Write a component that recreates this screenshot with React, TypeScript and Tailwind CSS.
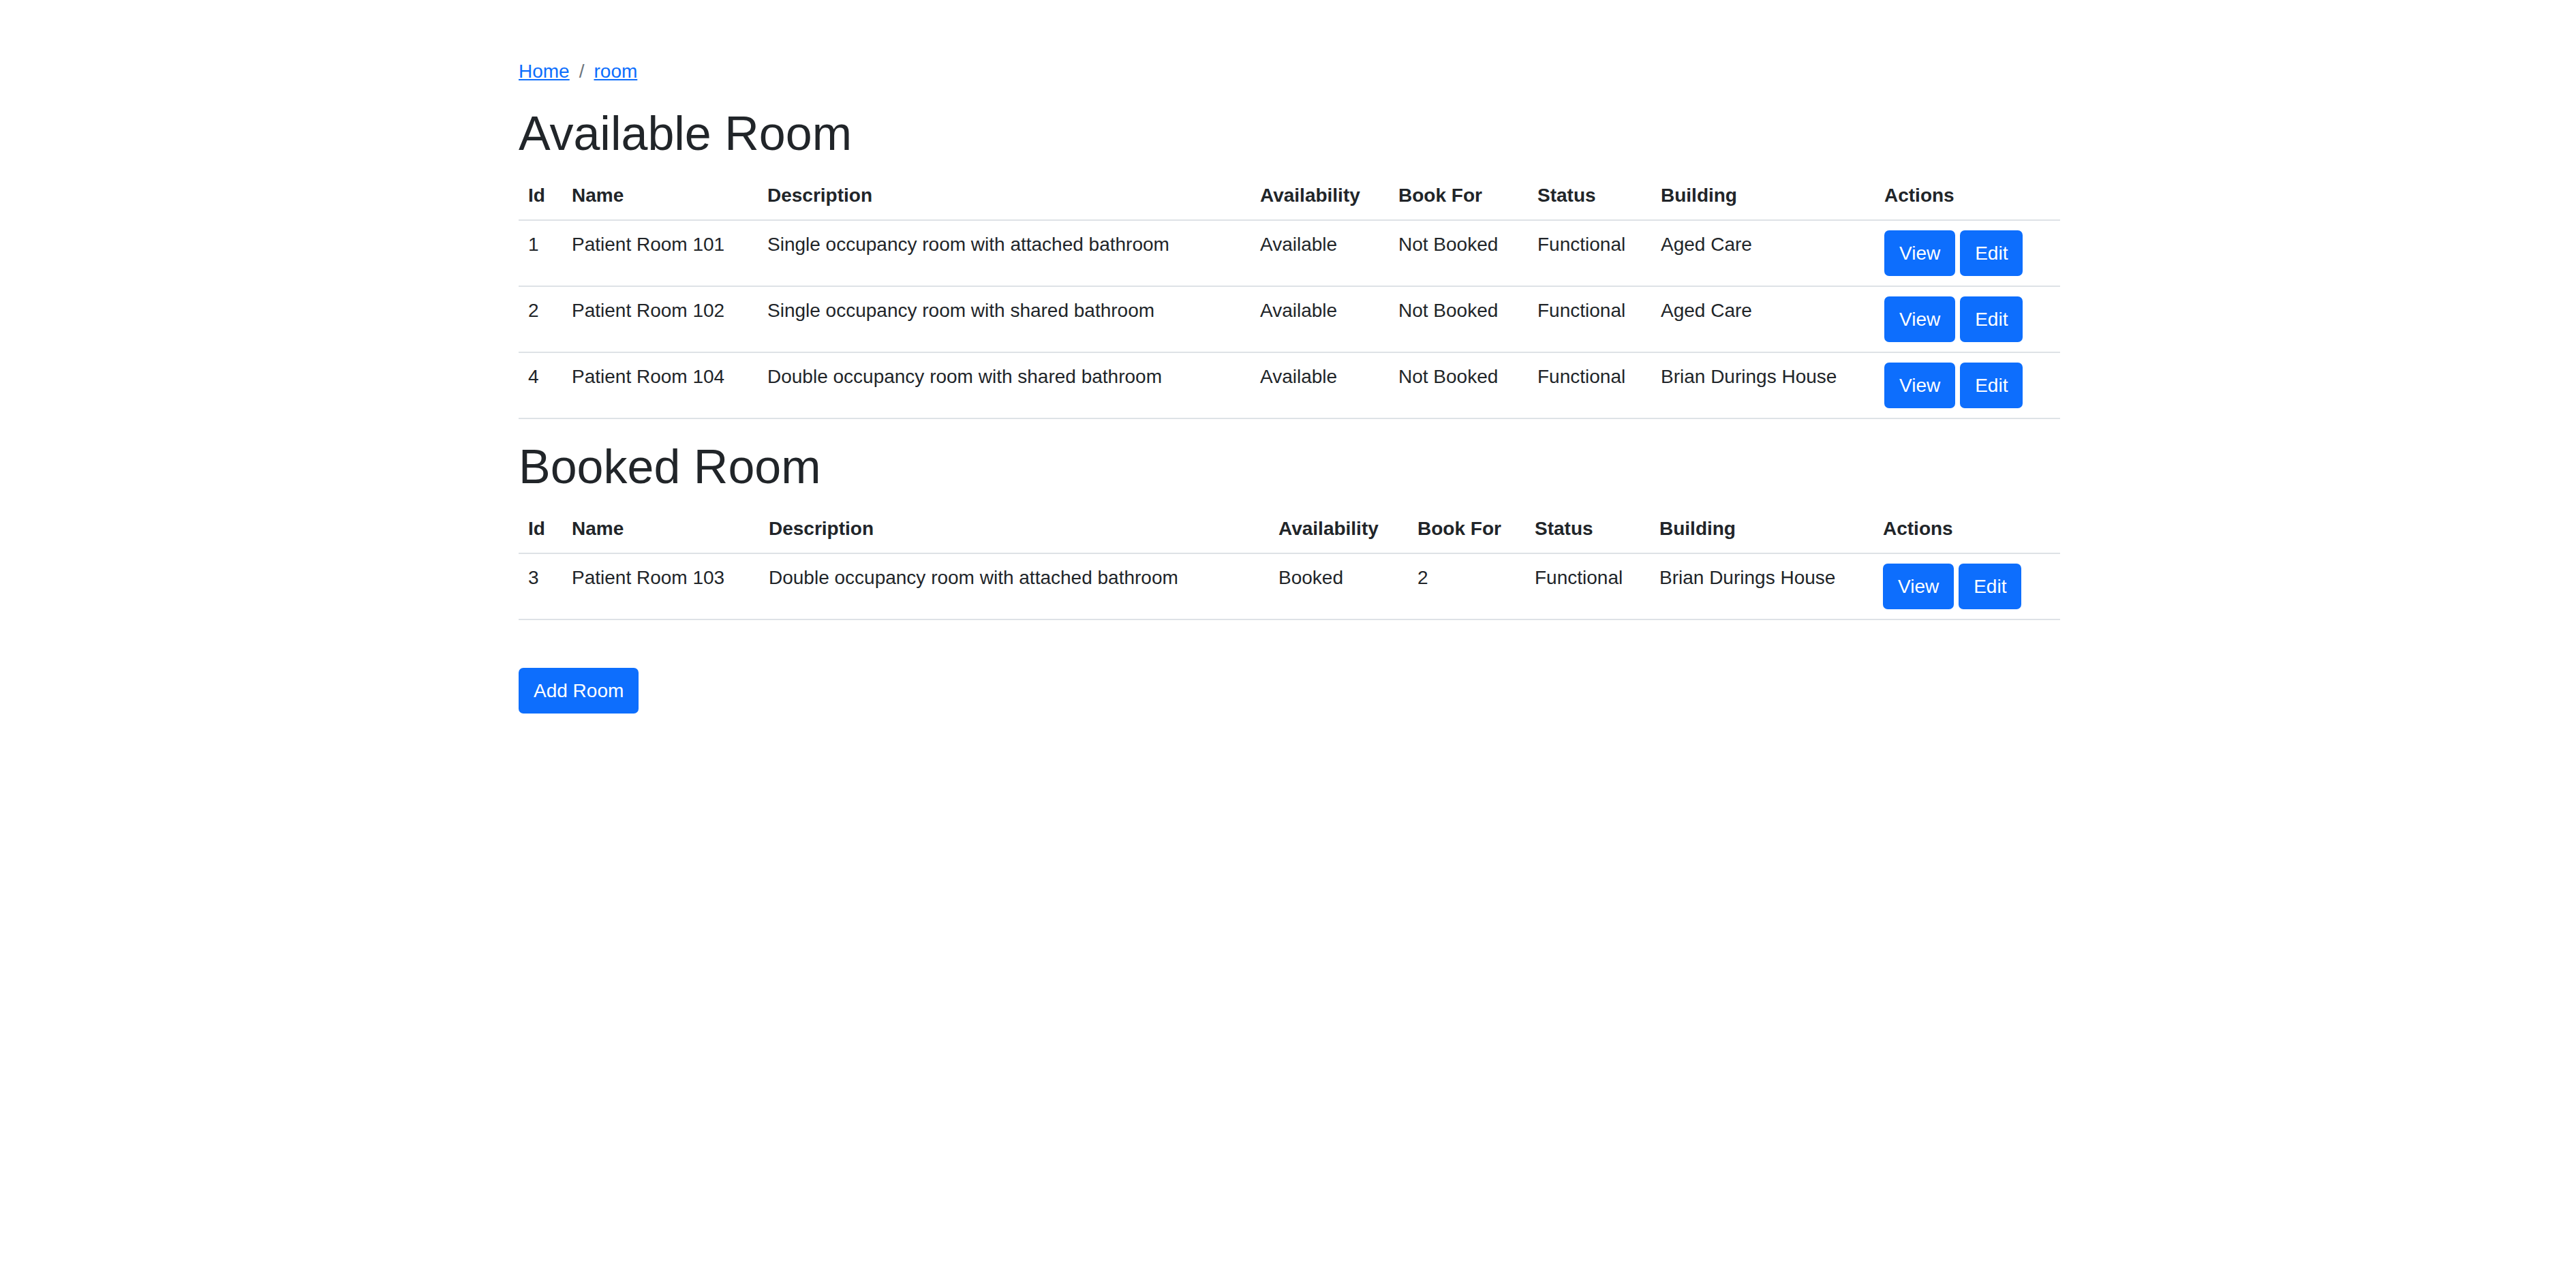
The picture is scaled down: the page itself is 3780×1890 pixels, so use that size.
import React from "react";

type Row = [number, string, string, string, string, string, string];

const available: Row[] = [
  [1, "Patient Room 101", "Single occupancy room with attached bathroom", "Available", "Not Booked", "Functional", "Aged Care"],
  [2, "Patient Room 102", "Single occupancy room with shared bathroom", "Available", "Not Booked", "Functional", "Aged Care"],
  [4, "Patient Room 104", "Double occupancy room with shared bathroom", "Available", "Not Booked", "Functional", "Brian Durings House"],
];

const booked: Row[] = [
  [3, "Patient Room 103", "Double occupancy room with attached bathroom", "Booked", "2", "Functional", "Brian Durings House"],
];

const headers = ["Id", "Name", "Description", "Availability", "Book For", "Status", "Building", "Actions"];

const widths1 = ["w-[64px]", "w-[287px]", "w-[723px]", "w-[203px]", "w-[204px]", "w-[181px]", "w-[328px]", "w-[272px]"];
const widths2 = ["w-[64px]", "w-[289px]", "w-[748px]", "w-[204px]", "w-[172px]", "w-[183px]", "w-[328px]", "w-[274px]"];

function Btn({ children }: { children: React.ReactNode }) {
  return (
    <button className="h-[67px] px-[22px] rounded-[7px] bg-[#0d6efd] text-white text-[28px] leading-[42px] flex items-center justify-center">
      {children}
    </button>
  );
}

function RoomTable({ rows, widths }: { rows: Row[]; widths: string[] }) {
  return (
    <table className="w-full table-fixed border-collapse mb-[28px] text-[#212529]">
      <thead>
        <tr>
          {headers.map((h, i) => (
            <th
              key={h}
              className={`${widths[i]} text-left font-bold align-bottom px-[14px] py-[14px] border-b-2 border-[#dee2e6] whitespace-nowrap`}
            >
              {h}
            </th>
          ))}
        </tr>
      </thead>
      <tbody>
        {rows.map((r) => (
          <tr key={r[0]}>
            {r.map((c, i) => (
              <td key={i} className="align-top px-[14px] py-[14px] border-b-2 border-[#dee2e6] whitespace-nowrap">
                {c}
              </td>
            ))}
            <td className="align-top px-[14px] py-[14px] border-b-2 border-[#dee2e6]">
              <div className="flex gap-[7px]">
                <Btn>View</Btn>
                <Btn>Edit</Btn>
              </div>
            </td>
          </tr>
        ))}
      </tbody>
    </table>
  );
}

export default function App() {
  return (
    <div className="min-h-screen bg-white font-['Liberation_Sans',Arial,sans-serif] text-[28px] leading-[42px] text-[#212529]">
      <div className="ml-[761px] w-[2262px] pt-[84px]">
        <nav className="flex items-center mb-[28px]">
          <a href="#" className="text-[#0d6efd] underline">Home</a>
          <span className="px-[14px] text-[#6c757d]">/</span>
          <a href="#" className="text-[#0d6efd] underline">room</a>
        </nav>
        <h1 className="text-[70px] leading-[84px] font-medium mb-[14px]">Available Room</h1>
        <RoomTable rows={available} widths={widths1} />
        <h1 className="text-[70px] leading-[84px] font-medium mb-[14px]">Booked Room</h1>
        <RoomTable rows={booked} widths={widths2} />
        <div className="pt-[42px] flex">
          <Btn>Add Room</Btn>
        </div>
      </div>
    </div>
  );
}
